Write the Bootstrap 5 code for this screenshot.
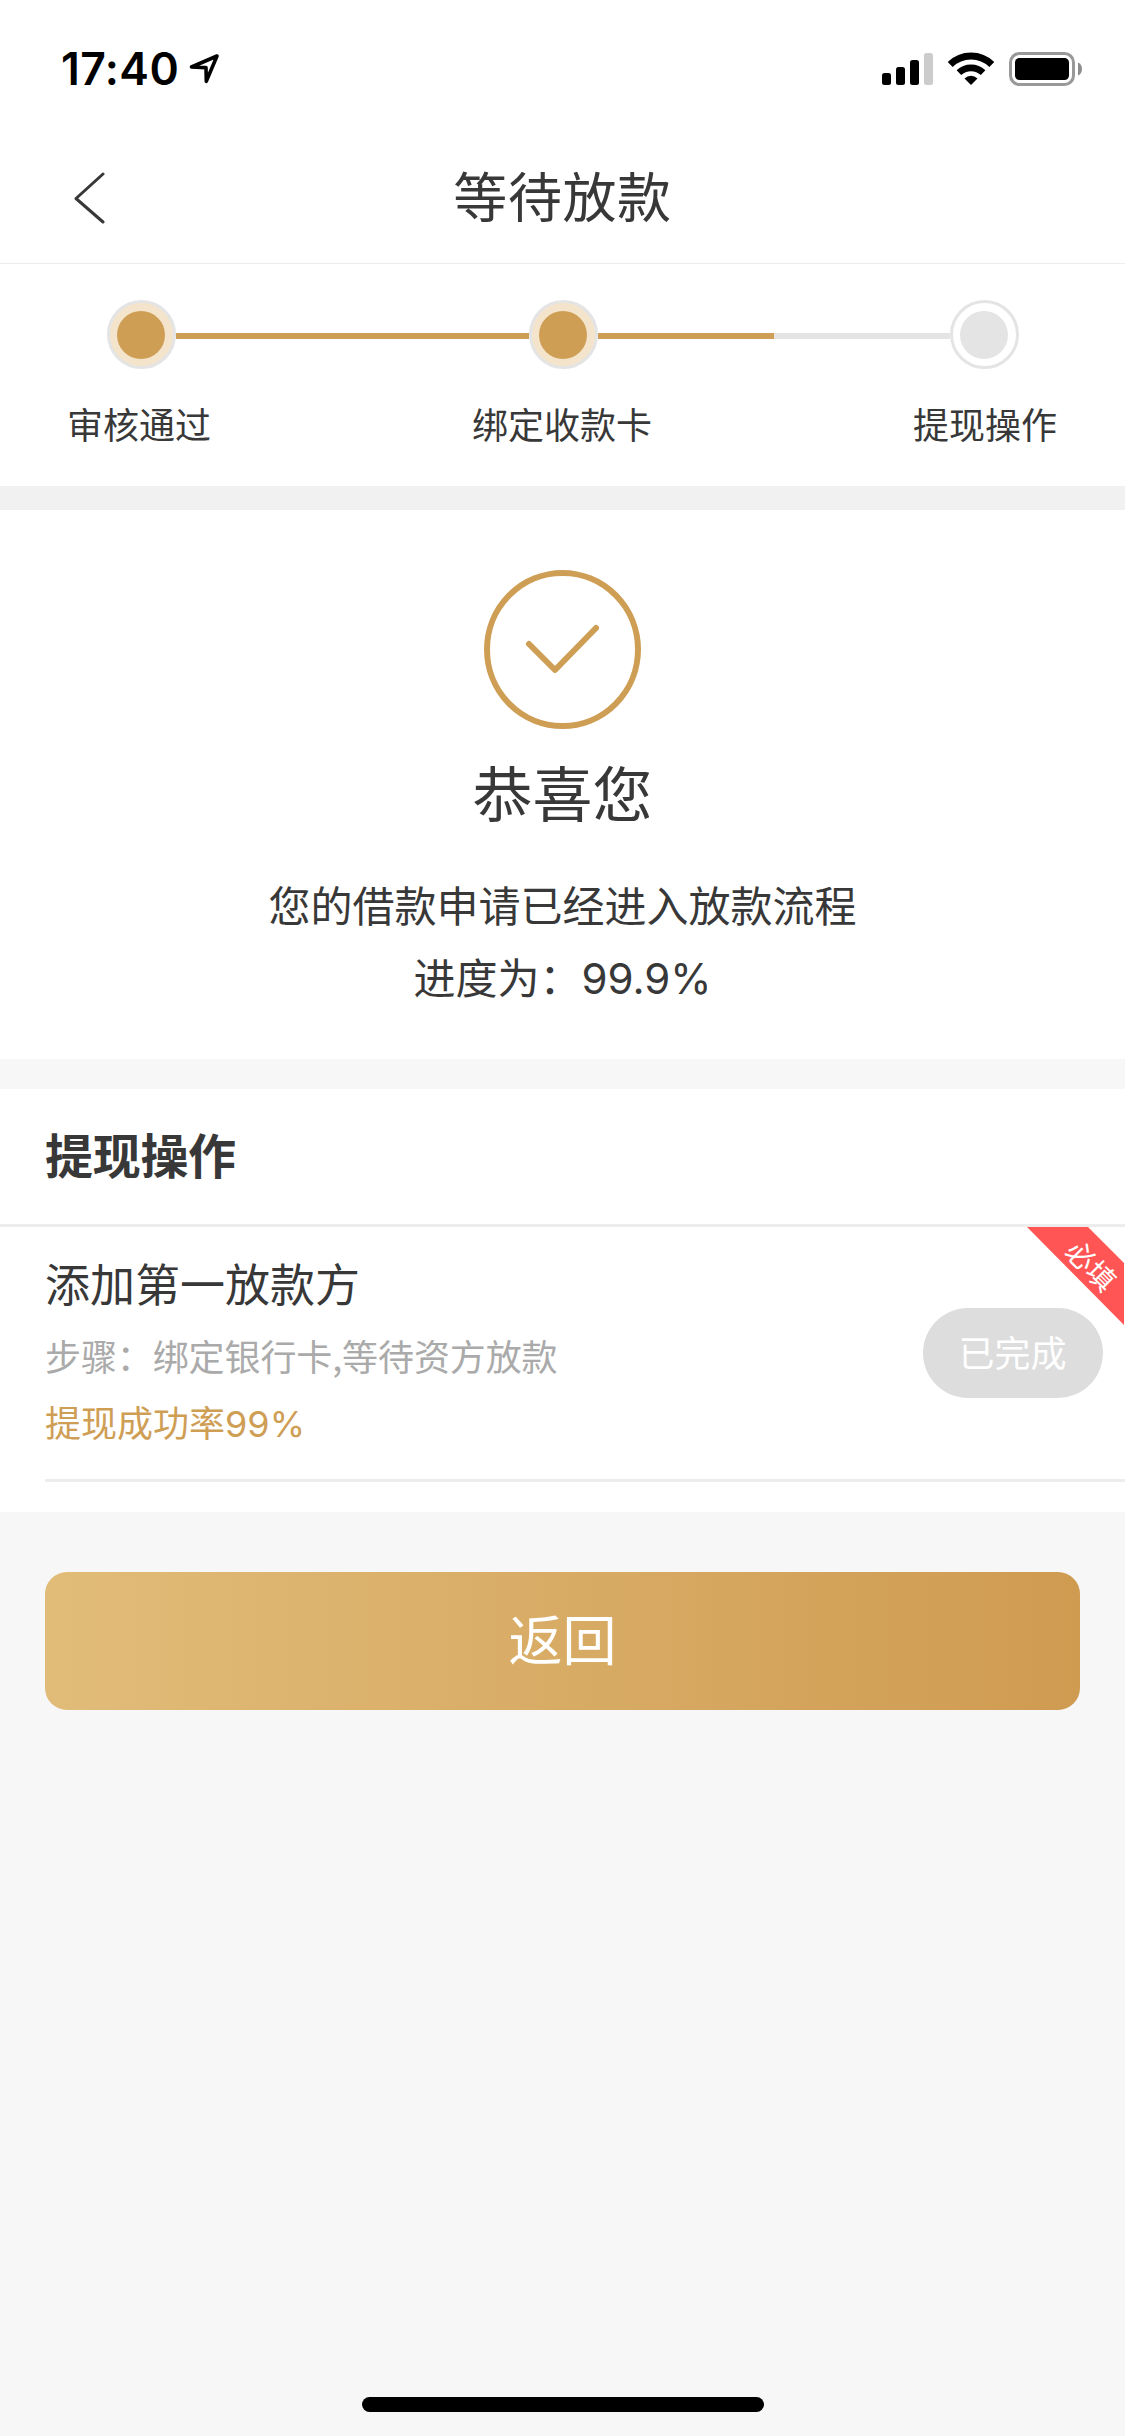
<!DOCTYPE html>
<html lang="zh-CN">
<head>
<meta charset="utf-8">
<meta name="viewport" content="width=device-width, initial-scale=1">
<title>等待放款</title>
<link href="https://cdn.jsdelivr.net/npm/bootstrap@5.3.0/dist/css/bootstrap.min.css" rel="stylesheet">
<style>
  :root { --gold: #cf9e55; --ink: #383838; --rule: #ededed; --idle: #e4e4e4; }
  body { font-family: "Noto Sans CJK SC", sans-serif; color: var(--ink); background: #f7f7f7; line-height: 1; }
  .screen { min-height: 2436px; }
  .latin { font-family: Inter, sans-serif; line-height: 1; font-weight: 400; }
  .status-bar { height: 132px; padding: 0 43px 0 61px; }
  .clock { font-family: Inter, sans-serif; font-weight: 600; font-size: 44.5px; color: #000; letter-spacing: .4px; padding-top: 47px; }
  .locator { margin: 52px 0 0 8px; }
  .title-bar { display: grid; grid-template-columns: 150px 1fr 150px; height: 132px; border-bottom: 1px solid var(--rule); }
  .title-bar h1 { font-size: 54px; font-weight: 400; line-height: 80px; padding-top: 23px; letter-spacing: .6px; }
  .back { padding: 40px 0 0 72px; }
  .steps { height: 222px; padding-top: 36px; }
  .track { height: 69px; padding: 0 106px 0 107px; }
  .dot { width: 69px; height: 69px; border: 3px solid var(--idle); }
  .dot::after { content: ""; width: 48px; height: 48px; border-radius: 50%; background: var(--idle); margin-right: 1px; }
  .dot.done { background: #f4e4cb; }
  .dot.done::after { background: var(--gold); }
  .seg { height: 6px; background: var(--gold); margin-top: 3px; }
  .seg.half { background: linear-gradient(90deg, var(--gold) 50%, var(--idle) 50%); }
  .labels { font-size: 36px; line-height: 54px; padding: 27px 68px 0 67px; }
  .band { height: 24px; background: #f1f1f1; }
  .result { height: 549px; padding-top: 59px; }
  .result h2 { font-size: 60px; font-weight: 400; line-height: 90px; margin: 16px 0 32px; }
  .result p { font-size: 42px; line-height: 72px; }
  .ops { margin-top: 30px; height: 423px; }
  .ops h3 { font-size: 48px; font-weight: 700; line-height: 72px; height: 138px; padding: 28px 0 0 45px; border-bottom: 3px solid var(--rule); letter-spacing: -.3px; }
  .funder { height: 255px; margin-left: 45px; border-bottom: 3px solid var(--rule); }
  .funder h4 { font-size: 45px; font-weight: 400; line-height: 66px; margin: 23px 0 0; }
  .funder p { font-size: 36px; line-height: 66px; }
  .hint { color: #aaa; margin-top: 6px; letter-spacing: -.1px; }
  .rate { color: var(--gold); }
  .pill { width: 180px; height: 90px; margin: 81px 22px 0 0; background: #ddd; color: #fff; font-size: 36px; line-height: 86px; padding-right: 1px; }
  .ribbon { top: 0; right: 1px; width: 97px; height: 98px; }
  .back-btn { height: 138px; margin: 60px 45px 0; border: 0; border-radius: 22px; color: #fff; font-size: 54px; line-height: 80px; background: linear-gradient(90deg, #e1bc79, #cf9b51); }
  .back-btn span { display: block; margin-top: -6px; }
  .home-bar { width: 402px; height: 15px; background: #000; margin: 0 auto 24px; }
</style>
</head>
<body>
<div class="screen d-flex flex-column">
  <div class="bg-white">
    <div class="status-bar d-flex justify-content-between align-items-start">
      <div class="d-flex">
        <span class="clock">17:40</span>
        <svg class="locator" width="34" height="34" viewBox="0 0 34 34" fill="none" stroke="#000" stroke-width="3.600" stroke-linejoin="round"><path d="M4.500 15 30 4 19.300 29.300 19 15.600Z"/></svg>
      </div>
      <svg width="202" height="36" viewBox="0 0 202 36" style="margin-top:51px">
        <g transform="translate(2 1)">
          <rect x="0" y="21" width="9" height="12" rx="2.500"/><rect x="14" y="15" width="9" height="18" rx="2.500"/>
          <rect x="28" y="8" width="9" height="25" rx="2.500"/><rect x="42" y="1" width="9" height="32" rx="2.500" fill="#ccc"/>
        </g>
        <g fill="none" stroke="#000">
          <path stroke-width="7" d="M70.200 13.500a29.600 29.600 0 0 1 41.600 0"/><path stroke-width="6.600" d="M78.900 21.700a17.500 17.500 0 0 1 24.200 0"/>
        </g>
        <path d="M84.500 27.500a9.200 9.200 0 0 1 13 0L91 34Z"/>
        <rect x="130.500" y="2.500" width="63" height="31" rx="9" fill="none" stroke="#999" stroke-width="3"/>
        <rect x="135" y="7" width="54" height="22" rx="4.500"/>
        <path d="M198 11.500c5.300 2 5.300 11 0 13Z" fill="#8c8c8c"/>
      </svg>
    </div>
    <div class="title-bar">
      <a class="back" href="#" aria-label="返回"><svg class="d-block" width="34" height="54" viewBox="0 0 34 54" fill="none" stroke="#383838" stroke-width="3" stroke-linecap="round" stroke-linejoin="round"><path d="M31 2 4 26.500 31 50"/></svg></a>
      <h1 class="text-center mb-0">等待放款</h1>
    </div>
    <div class="steps">
      <div class="track d-flex align-items-center">
        <div class="dot done rounded-circle d-flex align-items-center justify-content-center flex-shrink-0"></div>
        <div class="seg flex-fill"></div>
        <div class="dot done rounded-circle d-flex align-items-center justify-content-center flex-shrink-0"></div>
        <div class="seg half flex-fill"></div>
        <div class="dot rounded-circle d-flex align-items-center justify-content-center flex-shrink-0"></div>
      </div>
      <div class="labels d-flex justify-content-between"><span>审核通过</span><span>绑定收款卡</span><span>提现操作</span></div>
    </div>
  </div>
  <div class="band"></div>
  <div class="result bg-white text-center">
    <svg class="d-block mx-auto" width="159" height="161" viewBox="0 0 159 161" fill="none" stroke="#cf9e55" stroke-width="6"><ellipse cx="79.500" cy="80.500" rx="75.500" ry="76.500"/><path d="M46 75 72 101 113 59" stroke-linecap="round" stroke-linejoin="round"/></svg>
    <h2>恭喜您</h2>
    <p class="mb-0">您的借款申请已经进入放款流程</p>
    <p class="mb-0">进度为：<span class="latin">99.9%</span></p>
  </div>
  <section class="ops bg-white">
    <h3 class="mb-0">提现操作</h3>
    <div class="position-relative">
      <div class="funder d-flex justify-content-between">
        <div>
          <h4>添加第一放款方</h4>
          <p class="hint mb-0">步骤：绑定银行卡,等待资方放款</p>
          <p class="rate mb-0">提现成功率<span class="latin">99%</span></p>
        </div>
        <div class="pill rounded-pill text-center">已完成</div>
      </div>
      <svg class="ribbon position-absolute" viewBox="0 0 97 98"><path d="M0 0H61L97 36V98Z" fill="#ff5555"/><text transform="translate(64 39) rotate(45)" text-anchor="middle" y="10.500" font-size="28.500" fill="#fff">必填</text></svg>
    </div>
  </section>
  <button class="btn back-btn p-0" type="button"><span>返回</span></button>
  <div class="home-bar rounded-pill mt-auto"></div>
</div>
<script src="https://cdn.jsdelivr.net/npm/bootstrap@5.3.0/dist/js/bootstrap.bundle.min.js"></script>
</body>
</html>
